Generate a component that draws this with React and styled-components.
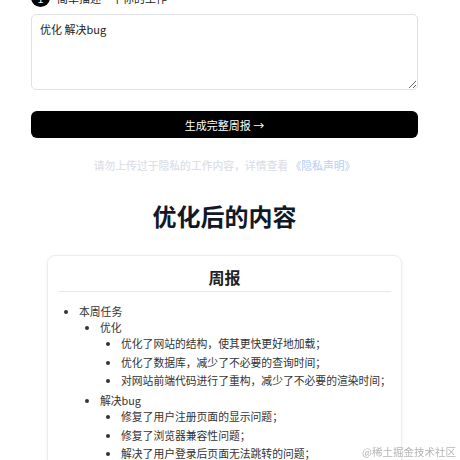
import styled, { createGlobalStyle } from 'styled-components';

const GlobalStyle = createGlobalStyle`
  html, body {
    margin: 0;
    padding: 0;
    background: #fff;
    overflow: hidden;
  }
  body {
    font-family: "Noto Sans CJK SC", "Noto Sans", "Liberation Sans", sans-serif;
    color: #222;
  }
`

const Page = styled.main`
  width: 387px;
  margin: -12px 0 0 31px;
  display: flex;
  flex-direction: column;
`

const StepRow = styled.div`
  display: flex;
  align-items: center;
  gap: 7px;
  height: 19px;
`

const StepNum = styled.span`
  width: 19px;
  height: 19px;
  border-radius: 50%;
  background: #000;
  color: #fff;
  font-size: 11px;
  display: flex;
  align-items: center;
  justify-content: center;
`

const StepLabel = styled.span`
  font-size: 11px;
  color: #222;
`

const Input = styled.textarea`
  margin-top: 7px;
  box-sizing: border-box;
  width: 100%;
  height: 76px;
  border: 1px solid #dfe1e5;
  border-radius: 5px;
  padding: 6px 8px;
  font-family: inherit;
  font-size: 11px;
  line-height: 16px;
  color: #222;
  outline: none;
`

const GenerateButton = styled.button`
  margin-top: 21px;
  height: 27px;
  border: none;
  border-radius: 6px;
  background: #000;
  color: #fff;
  font-family: inherit;
  font-size: 11px;
  cursor: pointer;
`

const Notice = styled.p`
  margin: 20px 0 0;
  text-align: center;
  font-size: 10.8px;
  line-height: 14px;
  color: #dce0e7;
  font-weight: 500;

  a {
    color: #c0d5f6;
    text-decoration: none;
  }
`

const Title = styled.h2`
  margin: 28px 0 0;
  text-align: center;
  font-size: 24px;
  line-height: 32px;
  font-weight: 700;
  color: #111827;
`

const Card = styled.section`
  margin: 23px 16px 0;
  border: 1px solid #ececec;
  border-radius: 8px;
  box-shadow: 0 1px 4px rgba(0, 0, 0, 0.05);
  padding: 10px 10px 20px;
`

const CardTitle = styled.h3`
  margin: 0;
  padding-bottom: 3px;
  border-bottom: 1px solid #e5e7eb;
  text-align: center;
  font-size: 16px;
  line-height: 22px;
  font-weight: 700;
  color: #222;
`

const List = styled.ul`
  margin: ${p => (p.$level === 1 ? '11px 0 0' : '0')};
  padding-left: 21px;
  list-style-type: disc;
  font-size: 10.8px;
  line-height: 16px;
  color: #333;

  & > li {
    white-space: nowrap;
  }

  & > li + li {
    margin-top: ${p => (p.$level === 3 ? '2.5px' : '4px')};
  }
`

const Watermark = styled.span`
  position: fixed;
  right: 4px;
  bottom: 1px;
  font-size: 10.5px;
  color: #b5b5b5;
  text-shadow: 0 0 2px #fff;
`

const tasks = [
  {
    name: '优化',
    items: [
      '优化了网站的结构，使其更快更好地加载；',
      '优化了数据库，减少了不必要的查询时间；',
      '对网站前端代码进行了重构，减少了不必要的渲染时间；',
    ],
  },
  {
    name: '解决bug',
    items: [
      '修复了用户注册页面的显示问题；',
      '修复了浏览器兼容性问题；',
      '解决了用户登录后页面无法跳转的问题；',
      '修复了部分页面样式错乱的问题。',
    ],
  },
]

export default function App() {
  return (
    <>
      <GlobalStyle />
      <Page>
        <StepRow>
          <StepNum>1</StepNum>
          <StepLabel>简单描述一下你的工作</StepLabel>
        </StepRow>
        <Input defaultValue="优化 解决bug" />
        <GenerateButton>生成完整周报 →</GenerateButton>
        <Notice>
          请勿上传过于隐私的工作内容，详情查看 <a href="#">《隐私声明》</a>
        </Notice>
        <Title>优化后的内容</Title>
        <Card>
          <CardTitle>周报</CardTitle>
          <List $level={1}>
            <li>
              本周任务
              <List $level={2}>
                {tasks.map(task => (
                  <li key={task.name}>
                    {task.name}
                    <List $level={3}>
                      {task.items.map(item => (
                        <li key={item}>{item}</li>
                      ))}
                    </List>
                  </li>
                ))}
              </List>
            </li>
          </List>
        </Card>
      </Page>
      <Watermark>@稀土掘金技术社区</Watermark>
    </>
  )
}
